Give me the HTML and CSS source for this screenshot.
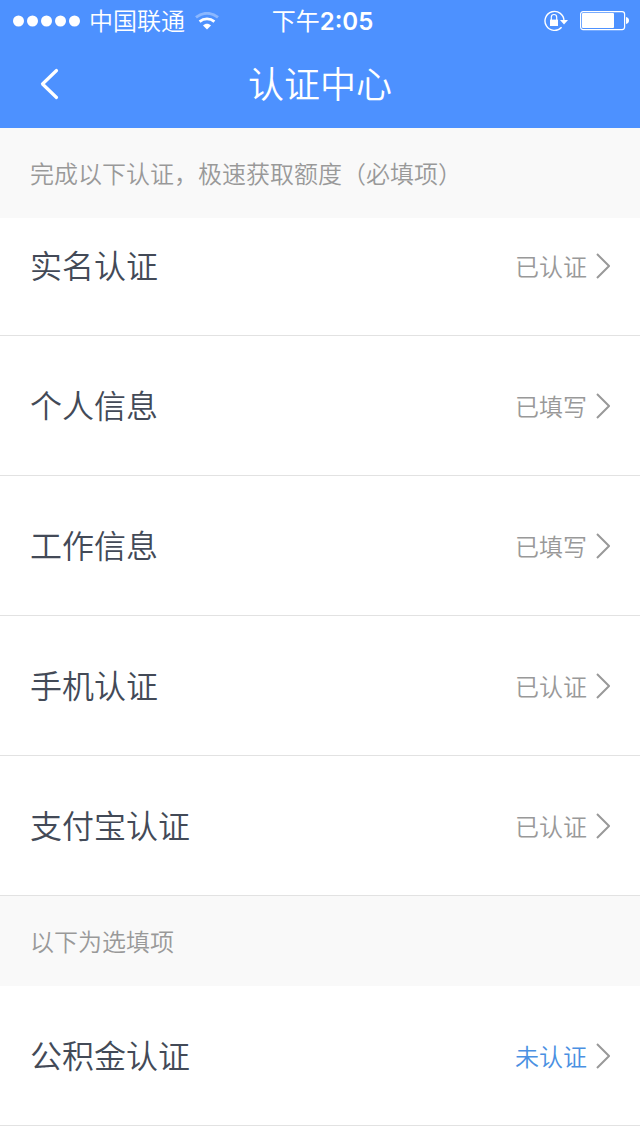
FILE: index.html
```html
<!DOCTYPE html>
<html lang="zh-CN">
<head>
    <meta charset="UTF-8">
    <meta name="viewport" content="width=device-width, initial-scale=1.0">
    <title>认证中心</title>
    <link rel="stylesheet" href="styles.css">
</head>
<body>
    <header class="header">
        <div class="status-bar">
            <div class="status-left">
                <svg class="signal" width="68" height="12" viewBox="0 0 68 12" fill="#fff" aria-hidden="true">
                    <circle cx="5.5" cy="6" r="5.5"/>
                    <circle cx="19.5" cy="6" r="5.5"/>
                    <circle cx="33.5" cy="6" r="5.5"/>
                    <circle cx="47.5" cy="6" r="5.5"/>
                    <circle cx="61.5" cy="6" r="5.5"/>
                </svg>
                <span class="carrier">中国联通</span>
                <svg class="wifi" width="24" height="18" viewBox="0 0 24 18" fill="none" aria-hidden="true">
                    <path d="M1 5.4C7.4-0.1 16.6-0.1 23 5.4" stroke="#fff" stroke-opacity=".35" stroke-width="2.8"/>
                    <path d="M4.6 9.6C8.9 6 15.1 6 19.4 9.6" stroke="#fff" stroke-width="2.8"/>
                    <path d="M8 13.4C10.3 11.2 13.7 11.2 16 13.4L12 17.6Z" fill="#fff"/>
                </svg>
            </div>
            <span class="time">下午<b>2:05</b></span>
            <div class="status-right">
                <svg width="24" height="22" viewBox="0 0 24 22" fill="none" aria-hidden="true">
                    <path d="M20 11A9.5 9.5 0 1 0 17.6 17.2" stroke="#fff" stroke-width="1.4"/>
                    <path d="M16 10H24L20 14.4Z" fill="#fff"/>
                    <rect x="6" y="9.6" width="8" height="6.4" fill="#fff"/>
                    <path d="M7.3 10V7.2A2.7 2.7 0 0 1 12.7 7.2V10" stroke="#fff" stroke-width="1.2"/>
                </svg>
                <svg width="50" height="20" viewBox="0 0 50 20" fill="none" aria-hidden="true">
                    <rect x=".6" y=".6" width="44" height="18" rx="2.5" stroke="#fff" stroke-width="1.2"/>
                    <rect x="2" y="2" width="32" height="15" rx="1" fill="#fff"/>
                    <path d="M46 6C48 6.5 49 7.8 49 9.5S48 12.5 46 13Z" fill="#fff"/>
                </svg>
            </div>
        </div>
        <div class="nav">
            <button class="back" type="button" aria-label="返回">
                <svg width="20" height="32" viewBox="0 0 20 32" fill="none" aria-hidden="true">
                    <path d="M16.5 2.5L2.5 16L16.5 29.5" stroke="#fff" stroke-width="3.2" stroke-linecap="round" stroke-linejoin="round"/>
                </svg>
            </button>
            <h1>认证中心</h1>
        </div>
    </header>

    <main>
        <h2 class="hint">完成以下认证，极速获取额度（必填项）</h2>
        <div class="list required">
            <a class="item" href="#realname">
                <span class="name">实名认证</span>
                <span class="state">已认证</span>
                <svg class="arrow" width="14" height="26" viewBox="0 0 14 26"><path d="M1 1L13 13L1 25"/></svg>
            </a>
            <a class="item" href="#personal">
                <span class="name">个人信息</span>
                <span class="state">已填写</span>
                <svg class="arrow" width="14" height="26" viewBox="0 0 14 26"><path d="M1 1L13 13L1 25"/></svg>
            </a>
            <a class="item" href="#work">
                <span class="name">工作信息</span>
                <span class="state">已填写</span>
                <svg class="arrow" width="14" height="26" viewBox="0 0 14 26"><path d="M1 1L13 13L1 25"/></svg>
            </a>
            <a class="item" href="#phone">
                <span class="name">手机认证</span>
                <span class="state">已认证</span>
                <svg class="arrow" width="14" height="26" viewBox="0 0 14 26"><path d="M1 1L13 13L1 25"/></svg>
            </a>
            <a class="item" href="#alipay">
                <span class="name">支付宝认证</span>
                <span class="state">已认证</span>
                <svg class="arrow" width="14" height="26" viewBox="0 0 14 26"><path d="M1 1L13 13L1 25"/></svg>
            </a>
        </div>

        <h2 class="hint">以下为选填项</h2>
        <div class="list">
            <a class="item" href="#fund">
                <span class="name">公积金认证</span>
                <span class="state todo">未认证</span>
                <svg class="arrow" width="14" height="26" viewBox="0 0 14 26"><path d="M1 1L13 13L1 25"/></svg>
            </a>
        </div>
    </main>
</body>
</html>
```
FILE: styles.css
```css
* {
    box-sizing: border-box;
}
body {
    margin: 0;
    background-color: #fff;
    color: #434a57;
    font-family: "Noto Sans CJK SC", sans-serif;
    font-weight: 350;
}
.header {
    background-color: #4d91ff;
    color: #fff;
}

/* status bar */
.status-bar {
    display: grid;
    grid-template-columns: 1fr auto 1fr;
    align-items: center;
    height: 40px;
    padding: 0 10px 0 13px;
    font-size: 24px;
    line-height: 40px;
}
.status-left,
.status-right {
    display: flex;
    align-items: center;
}
.carrier {
    margin: 0 10px 0 8px;
    padding-bottom: 2px;
    line-height: 38px;
}
.time {
    padding-left: 2px;
    font-weight: 400;
}
.time b {
    font-family: Inter, sans-serif;
    font-weight: 600;
}
.status-right {
    justify-content: flex-end;
    gap: 12px;
}

/* title bar */
.nav {
    display: grid;
    grid-template-columns: 100px 1fr 100px;
    align-items: center;
    height: 88px;
}
.back {
    display: flex;
    align-items: center;
    height: 88px;
    padding: 0 0 0 40px;
    border: none;
    background: none;
    cursor: pointer;
}
h1 {
    margin: 0;
    padding-bottom: 4px;
    font-size: 36px;
    font-weight: 350;
    line-height: 84px;
    text-align: center;
}

/* list */
.hint {
    margin: 0;
    padding: 0 30px;
    background-color: #f9f9f9;
    color: #999;
    font-size: 24px;
    font-weight: 350;
    line-height: 90px;
}
.item {
    display: flex;
    align-items: center;
    height: 140px;
    padding: 0 30px;
    border-bottom: 1px solid #e2e2e2;
    color: inherit;
    text-decoration: none;
}
.required .item:first-child {
    height: 118px;
    padding-bottom: 22px;
}
.name {
    flex: 1;
    padding-bottom: 4px;
    font-size: 32px;
}
.state {
    margin-right: 9px;
    color: #999;
    font-size: 24px;
}
.todo {
    color: #4a90e2;
}
.arrow {
    fill: none;
    stroke: #999;
    stroke-width: 2;
}
```
